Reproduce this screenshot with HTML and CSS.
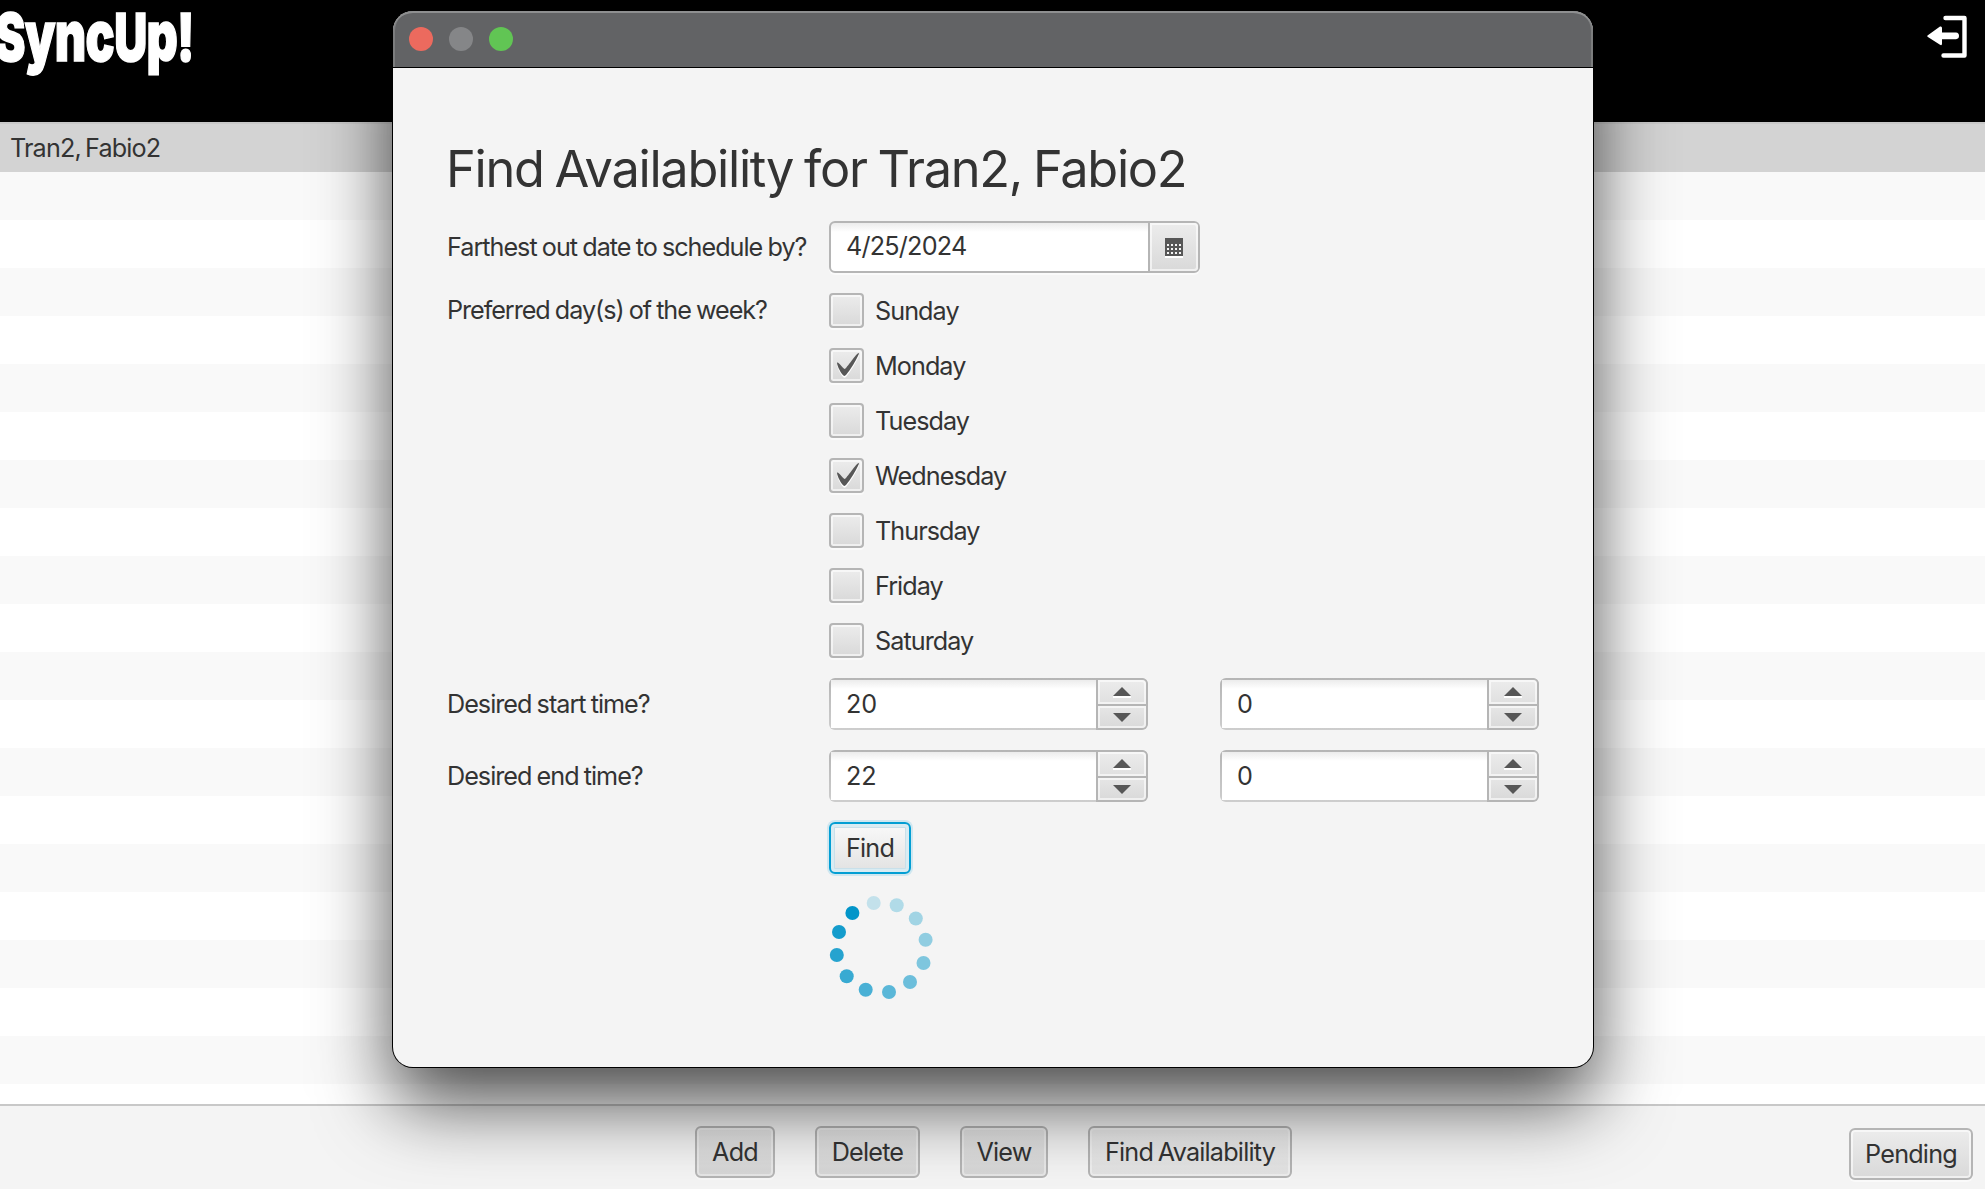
FILE: index.html
```html
<!DOCTYPE html>
<html lang="en">
<head>
<meta charset="utf-8">
<title>SyncUp!</title>
<link rel="stylesheet" href="styles.css">
</head>
<body>
<div class="app">
  <header class="app-header">
    <h1 class="logo">S<span class="lower">ync</span>U<span class="lower">p</span>!</h1>
    <svg class="logout" width="42" height="44" viewBox="0 0 42 44">
      <path d="M19.5 4H38.5V41.5H17.5" fill="none" stroke="#fff" stroke-width="4.4" stroke-linecap="round" stroke-linejoin="round"/>
      <path d="M1.5 21.5L14 12.6Q16 12 16 14V18.6H30Q33 19 33 21.8Q33 25 30 25.2H16V29.5Q16 32 14 30.8L1.5 22.8Q1 22 1.5 21.5Z" fill="#fff"/>
    </svg>
  </header>
  <main class="list">
    <div class="list-row selected">Tran2, Fabio2</div>
  </main>
  <footer class="toolbar">
    <div class="actions">
      <button class="btn add">Add</button>
      <button class="btn delete">Delete</button>
      <button class="btn view">View</button>
      <button class="btn hover find-availability">Find Availability</button>
    </div>
    <button class="btn pending">Pending</button>
  </footer>
</div>

<section class="window">
  <div class="titlebar"><i class="light close"></i><i class="light minimize"></i><i class="light zoom"></i></div>
  <div class="form">
    <h2 class="title">Find Availability for Tran2, Fabio2</h2>

    <label class="label">Farthest out date to schedule by?</label>
    <div class="field date">
      <span class="value">4/25/2024</span>
      <span class="picker">
        <svg width="18" height="20" viewBox="0 0 18 20" shape-rendering="crispEdges">
          <path d="M0 18h18v2H0z" fill="#fff"/>
          <path d="M0 0h18v18H0z" fill="#575757"/>
          <path d="M2 6h2v2H2zM6 6h2v2H6zM10 6h2v2h-2zM14 6h2v2h-2zM2 10h2v2H2zM6 10h2v2H6zM10 10h2v2h-2zM14 10h2v2h-2zM2 14h2v2H2zM6 14h2v2H6zM10 14h2v2h-2zM14 14h2v2h-2z" fill="#f4f4f4"/>
        </svg>
      </span>
    </div>

    <label class="label days-label">Preferred day(s) of the week?</label>
    <div class="days">
      <div class="day"><i class="box"></i><span>Sunday</span></div>
      <div class="day"><i class="box"><svg class="mark" viewBox="-0.4 -1 16.5 17.2" preserveAspectRatio="none"><use href="#check" y="1.4" fill="#fff"/><path id="check" d="M-0.25,6.083c0.843-0.758,4.583,4.833,5.75,4.833S14.5-1.5,15.917-0.917c1.292,0.532-8.75,17.083-10.5,17.083C3,16.167-1.083,6.833-0.25,6.083z"/></svg></i><span>Monday</span></div>
      <div class="day"><i class="box"></i><span>Tuesday</span></div>
      <div class="day"><i class="box"><svg class="mark" viewBox="-0.4 -1 16.5 17.2" preserveAspectRatio="none"><use href="#check" y="1.4" fill="#fff"/><use href="#check"/></svg></i><span>Wednesday</span></div>
      <div class="day"><i class="box"></i><span>Thursday</span></div>
      <div class="day"><i class="box"></i><span>Friday</span></div>
      <div class="day"><i class="box"></i><span>Saturday</span></div>
    </div>

    <label class="label">Desired start time?</label>
    <div class="field spinner"><span class="value">20</span><span class="steps"><i class="step up"></i><i class="step down"></i></span></div>
    <div class="field spinner"><span class="value">0</span><span class="steps"><i class="step up"></i><i class="step down"></i></span></div>

    <label class="label">Desired end time?</label>
    <div class="field spinner"><span class="value">22</span><span class="steps"><i class="step up"></i><i class="step down"></i></span></div>
    <div class="field spinner"><span class="value">0</span><span class="steps"><i class="step up"></i><i class="step down"></i></span></div>

    <button class="btn find">Find</button>

    <svg class="progress" width="104" height="106" viewBox="829 894 104 106">
      <circle cx="873.7" cy="903" r="7" fill="#c3e1eb"/>
      <circle cx="896.7" cy="905.2" r="7" fill="#b1dbe8"/>
      <circle cx="915.8" cy="918.5" r="7" fill="#a1d4e4"/>
      <circle cx="925.6" cy="939.7" r="7" fill="#90cde1"/>
      <circle cx="923.5" cy="963" r="7" fill="#7ec6de"/>
      <circle cx="910" cy="982" r="7" fill="#6cbedb"/>
      <circle cx="889" cy="992" r="7" fill="#5ab7d8"/>
      <circle cx="865.7" cy="989.7" r="7" fill="#49b0d5"/>
      <circle cx="846.7" cy="976.3" r="7" fill="#38aad2"/>
      <circle cx="836.8" cy="955" r="7" fill="#26a3cf"/>
      <circle cx="839" cy="932" r="7" fill="#149ccc"/>
      <circle cx="852.4" cy="913" r="7" fill="#0295c9"/>
    </svg>
  </div>
</section>
</body>
</html>
```
FILE: styles.css
```css
* { box-sizing: border-box; }

body {
  margin: 0;
  width: 1985px;
  height: 1189px;
  overflow: hidden;
  position: relative;
  font-family: Inter, "Liberation Sans", sans-serif;
  font-size: 25.2px;
  letter-spacing: -0.85px;
  word-spacing: -2px;
  color: #333;
}

.app {
  height: 1189px;
  display: flex;
  flex-direction: column;
}

.app-header {
  height: 122px;
  flex: none;
  background: #000;
  display: flex;
  justify-content: space-between;
  align-items: flex-start;
}

.logo {
  margin: 0 0 0 -5px;
  color: #fff;
  font-size: 66px;
  font-weight: 900;
  line-height: 72px;
  letter-spacing: -1px;
  white-space: nowrap;
  -webkit-text-stroke: 1.5px #fff;
  transform: scaleX(0.692);
  transform-origin: 0 0;
}

.logo .lower { font-size: 70px; }

.logout { margin: 14px 17px 0 0; }

.list {
  flex: 1;
  background: repeating-linear-gradient(#f9f9f9 0 48px, #fff 48px 96px) 0 50px;
}

.list-row {
  height: 50px;
  padding-left: 10px;
}

.selected {
  background: #d3d3d3;
  border-top: 2px solid #c8c8c8;
  line-height: 48px;
}

.toolbar {
  height: 85px;
  flex: none;
  border-top: 2px solid #c8c8c8;
  background: #f4f4f4;
  display: flex;
  align-items: flex-start;
  justify-content: space-between;
  padding: 20px 12px 0 695px;
}

.actions { display: flex; gap: 40px; }

.btn {
  height: 52px;
  padding: 0;
  border: 2px solid #b5b5b5;
  border-radius: 6px;
  background: linear-gradient(#ececec, #d9d9d9);
  box-shadow: inset 0 0 0 2px rgba(255, 255, 255, 0.6), 0 2px 0 #fafafa;
  font: inherit;
  letter-spacing: -0.8px;
  word-spacing: -1.5px;
  color: #333;
  white-space: nowrap;
}

.actions .btn {
  background: linear-gradient(#e6e6e6, #d6d6d6);
  box-shadow: inset 0 0 0 2px rgba(255, 255, 255, 0.4), 0 2px 0 #f8f8f8;
}

.actions .hover { background: linear-gradient(#eee, #e2e2e2); }
.add { width: 80px; }
.delete { width: 105px; }
.view { width: 88px; }
.find-availability { width: 204px; }
.pending { width: 124px; margin-top: 2px; }

.window {
  position: absolute;
  left: 393px;
  top: 11px;
  width: 1200px;
  height: 1056px;
  border-radius: 20px;
  background: #f4f4f4;
  box-shadow: 0 0 0 1px #000, 0 36px 76px rgba(0, 0, 0, 0.7);
}

.titlebar {
  height: 57px;
  border-radius: 20px 20px 0 0;
  border-bottom: 1px solid #000;
  background: #626365;
  box-shadow: inset 0 2px 0 #8e8f90, inset 2px 0 0 #7c7d7e, inset -2px 0 0 #7c7d7e;
  display: flex;
  align-items: center;
  gap: 16px;
  padding-left: 16px;
}

.light { width: 24px; height: 24px; border-radius: 50%; }
.close { background: #ec6a5e; }
.minimize { background: #858688; }
.zoom { background: #61c554; }

.form {
  display: grid;
  grid-template-columns: 362px 371px 319px;
  gap: 20px;
  padding: 69px 54px 0;
}

.title {
  grid-column: 1 / -1;
  margin: 0 0 0 -1px;
  height: 64px;
  line-height: 64px;
  font-size: 50.5px;
  font-weight: 400;
  letter-spacing: -1.3px;
  word-spacing: -2px;
  white-space: nowrap;
}

.label {
  grid-column: 1;
  line-height: 52px;
  letter-spacing: -1px;
  word-spacing: -0.9px;
  white-space: nowrap;
}

.days-label { line-height: 34px; letter-spacing: -1.05px; }

.field {
  height: 52px;
  border: 2px solid #b5b5b5;
  border-radius: 6px;
  display: flex;
  overflow: hidden;
  background: linear-gradient(#ececec, #fff 9px);
}

.value {
  flex: 1;
  padding-left: 15px;
  line-height: 48px;
  letter-spacing: -0.2px;
}

.date { overflow: visible; box-shadow: 0 2px 0 #fafafa; }
.date .value { line-height: 46px; letter-spacing: -0.8px; }

.picker {
  width: 50px;
  border-left: 2px solid #b5b5b5;
  border-radius: 0 4px 4px 0;
  background: linear-gradient(#ececec, #d9d9d9);
  box-shadow: inset 0 0 0 2px rgba(255, 255, 255, 0.6);
  display: flex;
  align-items: center;
  justify-content: center;
  padding-top: 2px;
}

.spinner {
  width: 319px;
  padding: 2px;
  border: 0;
  background:
    linear-gradient(#ececec, #fff 9px) 2px 2px / 315px 48px no-repeat,
    linear-gradient(#b5b5b5, #cdcdcd);
}

.steps {
  width: 52px;
  margin: -2px;
  border: 2px solid #b5b5b5;
  border-radius: 0 6px 6px 0;
  display: flex;
  flex-direction: column;
  gap: 2px;
  background: #b5b5b5;
}

.step {
  height: 22px;
  display: flex;
  justify-content: center;
  background: linear-gradient(#ececec, #e0e0e0);
  box-shadow: inset 0 0 0 2px rgba(255, 255, 255, 0.6);
}

.step.up { height: 24px; border-top-right-radius: 4px; }
.step.down { border-bottom-right-radius: 4px; background: linear-gradient(#e6e6e6, #d9d9d9); }

.step::before {
  content: "";
  width: 18px;
  height: 11px;
  margin-top: 7px;
  background: linear-gradient(#575757 9px, #fff 9px);
  clip-path: polygon(50% 0, 100% 9px, 100% 100%, 0 100%, 0 9px);
}

.step.down::before {
  background: #575757;
  height: 9px;
  clip-path: polygon(0 0, 100% 0, 50% 100%);
}

.days {
  display: flex;
  flex-direction: column;
  gap: 20px;
}

.day {
  height: 35px;
  display: flex;
  gap: 11px;
  line-height: 36px;
  letter-spacing: -0.95px;
}

.box {
  width: 35px;
  height: 35px;
  padding: 3px 0 0 6px;
  border: 2px solid #b5b5b5;
  border-radius: 4px;
  background: linear-gradient(#ececec, #d9d9d9);
  box-shadow: inset 0 0 0 2px rgba(255, 255, 255, 0.6), 0 2px 0 #fafafa;
}

.mark {
  display: block;
  width: 22px;
  height: 23px;
  fill: #575757;
  overflow: visible;
}

.find {
  grid-column: 2;
  justify-self: start;
  width: 82px;
  border-color: #039ed3;
  background: linear-gradient(#f9f9f9, #e2e2e2);
  box-shadow: inset 0 0 0 3px #d9ecf3, inset 0 0 0 4px #c9e0ea, 0 0 0 2px #cfe7f0;
}

.progress { grid-column: 2; }
```
